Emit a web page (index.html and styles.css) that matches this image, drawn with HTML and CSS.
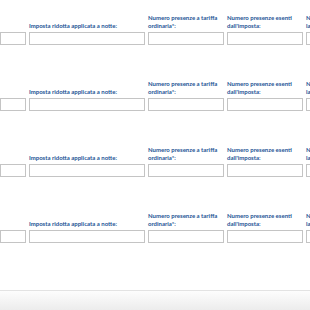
FILE: index.html
```html
<!DOCTYPE html>
<html lang="it">
<head>
    <meta charset="UTF-8">
    <meta name="viewport" content="width=device-width, initial-scale=1.0">
    <title>Presenze</title>
    <link rel="stylesheet" href="styles.css">
</head>
<body>
    <div class="page">
        <div class="rows">
            <div class="row">
                <div class="field"><label></label><input type="text"></div>
                <div class="field"><label>Imposta ridotta applicata a notte:</label><input type="text"></div>
                <div class="field"><label>Numero presenze a tariffa ordinaria*:</label><input type="text"></div>
                <div class="field"><label>Numero presenze esenti dall'imposta:</label><input type="text"></div>
                <div class="field"><label>Numero presenze esenti lavoratori:</label><input type="text"></div>
            </div>
            <div class="row">
                <div class="field"><label></label><input type="text"></div>
                <div class="field"><label>Imposta ridotta applicata a notte:</label><input type="text"></div>
                <div class="field"><label>Numero presenze a tariffa ordinaria*:</label><input type="text"></div>
                <div class="field"><label>Numero presenze esenti dall'imposta:</label><input type="text"></div>
                <div class="field"><label>Numero presenze esenti lavoratori:</label><input type="text"></div>
            </div>
            <div class="row">
                <div class="field"><label></label><input type="text"></div>
                <div class="field"><label>Imposta ridotta applicata a notte:</label><input type="text"></div>
                <div class="field"><label>Numero presenze a tariffa ordinaria*:</label><input type="text"></div>
                <div class="field"><label>Numero presenze esenti dall'imposta:</label><input type="text"></div>
                <div class="field"><label>Numero presenze esenti lavoratori:</label><input type="text"></div>
            </div>
            <div class="row">
                <div class="field"><label></label><input type="text"></div>
                <div class="field"><label>Imposta ridotta applicata a notte:</label><input type="text"></div>
                <div class="field"><label>Numero presenze a tariffa ordinaria*:</label><input type="text"></div>
                <div class="field"><label>Numero presenze esenti dall'imposta:</label><input type="text"></div>
                <div class="field"><label>Numero presenze esenti lavoratori:</label><input type="text"></div>
            </div>
        </div>
        <div class="footer"></div>
    </div>
</body>
</html>
```

FILE: styles.css
```css
body {
    margin: 0;
    background: #ffffff;
    font-family: Lato, "Liberation Sans", sans-serif;
    overflow: hidden;
}
.page {
    width: 310px;
    overflow: hidden;
}
.rows {
    padding-bottom: 26px;
}
.row {
    display: grid;
    grid-template-columns: 26px 116px 76px 76px 76px;
    column-gap: 3px;
    height: 66px;
    padding-top: 14px;
    box-sizing: border-box;
}
.field {
    display: flex;
    flex-direction: column;
    justify-content: flex-start;
}
.field label {
    display: flex;
    align-items: flex-end;
    height: 16px;
    margin-bottom: 2px;
    font-size: 6px;
    line-height: 8px;
    font-weight: 700;
    color: #245395;
    white-space: normal;
}
.field input {
    box-sizing: border-box;
    width: 100%;
    height: 13px;
    margin: 0;
    padding: 0 3px;
    border: 1px solid #c4c4c4;
    background: #ffffff;
    font-size: 7px;
}
.footer {
    height: 20px;
    border-top: 1px solid #e3e3e3;
    background: linear-gradient(#fdfdfd, #ebebeb);
}
```
